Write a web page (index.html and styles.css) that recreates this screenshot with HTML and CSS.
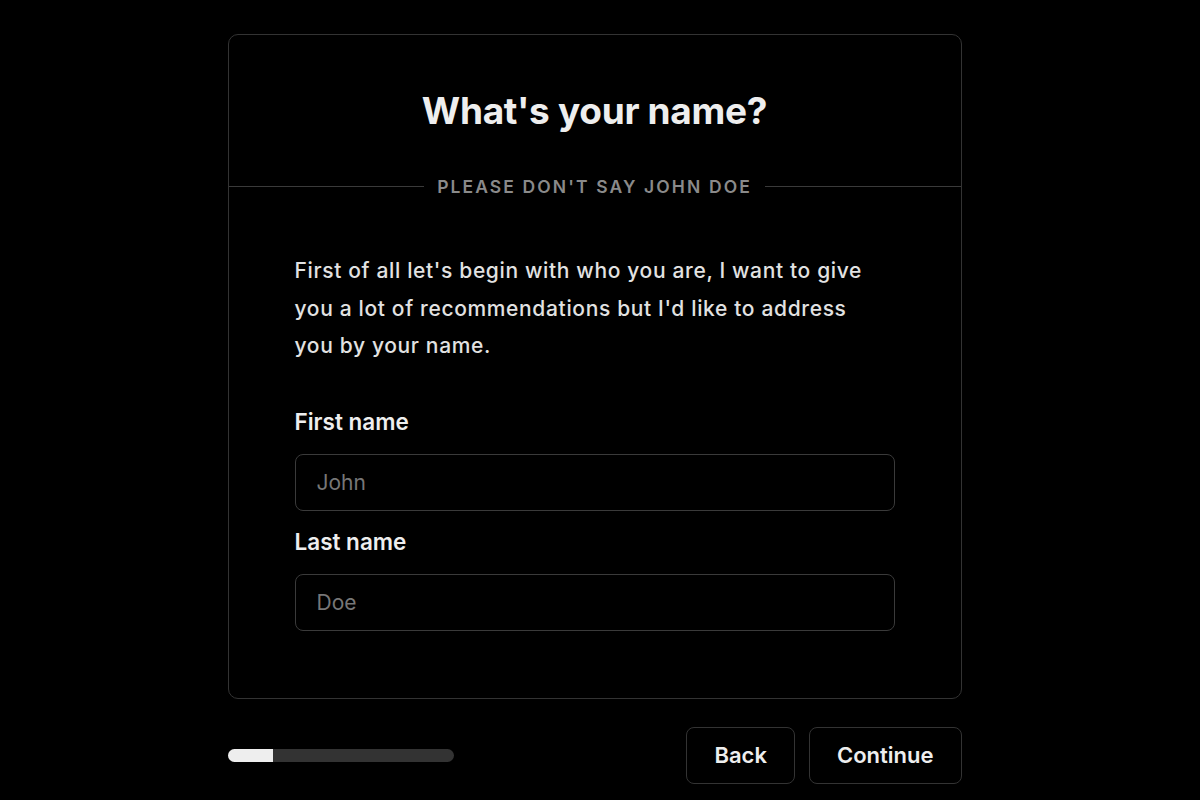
FILE: index.html
```html
<!DOCTYPE html>
<html lang="en">
<head>
    <meta charset="UTF-8">
    <meta name="viewport" content="width=device-width, initial-scale=1.0">
    <title>What's your name?</title>
    <link rel="stylesheet" href="styles.css">
</head>
<body>

<main class="page">
    <section class="card">
        <h1>What's your name?</h1>

        <div class="divider">
            <span>PLEASE DON'T SAY JOHN DOE</span>
        </div>

        <div class="card-body">
            <p>First of all let's begin with who you are, I want to give you a lot of recommendations but I'd like to address you by your name.</p>

            <form id="nameForm">
                <label for="firstName">First name</label>
                <input type="text" id="firstName" name="firstName" placeholder="John">

                <label for="lastName">Last name</label>
                <input type="text" id="lastName" name="lastName" placeholder="Doe">
            </form>
        </div>
    </section>

    <div class="footer-row">
        <div class="progress">
            <div class="progress-fill" style="width: 20%"></div>
        </div>
        <div class="actions">
            <button type="button">Back</button>
            <button type="button">Continue</button>
        </div>
    </div>
</main>

</body>
</html>
```

FILE: styles.css
```css
body {
    font-family: Inter, "Noto Sans", sans-serif;
    background: #000;
    color: #ececec;
    margin: 0;
    padding: 0 11px 0 0;
}

.page {
    width: 734px;
    margin: 34px auto 0;
}

.card {
    border: 1px solid #333;
    border-radius: 10px;
    padding: 51px 0 67px;
}

h1 {
    margin: 0;
    text-align: center;
    font-size: 37px;
    line-height: 50px;
    font-weight: 700;
    color: #eee;
    letter-spacing: -0.3px;
}

.divider {
    display: flex;
    align-items: center;
    gap: 13px;
    margin-top: 38px;
    height: 24px;
}

.divider::before,
.divider::after {
    content: "";
    flex: 1;
    height: 1px;
    background: #3a3a3a;
}

.divider span {
    font-size: 17.5px;
    font-weight: 600;
    letter-spacing: 2.1px;
    color: #8a8a8a;
}

.card-body {
    padding: 0 66px;
}

.card-body p {
    max-width: 578px;
    margin: 54px 0 0;
    font-size: 21px;
    line-height: 37.5px;
    font-weight: 500;
    letter-spacing: 0.65px;
    color: #e2e2e2;
}

form {
    margin-top: 43px;
}

label {
    display: block;
    font-size: 22.5px;
    line-height: 28px;
    font-weight: 600;
    color: #eee;
}

input {
    display: block;
    width: 100%;
    height: 57px;
    box-sizing: border-box;
    margin: 18px 0 17px;
    padding: 0 21px;
    background: #000;
    border: 1px solid #3a3a3a;
    border-radius: 8px;
    font-family: inherit;
    font-size: 21px;
    color: #eee;
    outline: none;
}

input:last-child {
    margin-bottom: 0;
}

input::placeholder {
    color: #777;
}

.footer-row {
    display: flex;
    align-items: center;
    justify-content: space-between;
    margin-top: 28px;
}

.progress {
    width: 226px;
    height: 13px;
    border-radius: 7px;
    background: #333;
    overflow: hidden;
}

.progress-fill {
    height: 100%;
    background: #eee;
}

.actions {
    display: flex;
    gap: 14px;
}

button {
    height: 57px;
    padding: 0 27px;
    background: #000;
    color: #eee;
    border: 1px solid #333;
    border-radius: 8px;
    font-family: inherit;
    font-size: 22px;
    font-weight: 600;
    cursor: pointer;
}
```
